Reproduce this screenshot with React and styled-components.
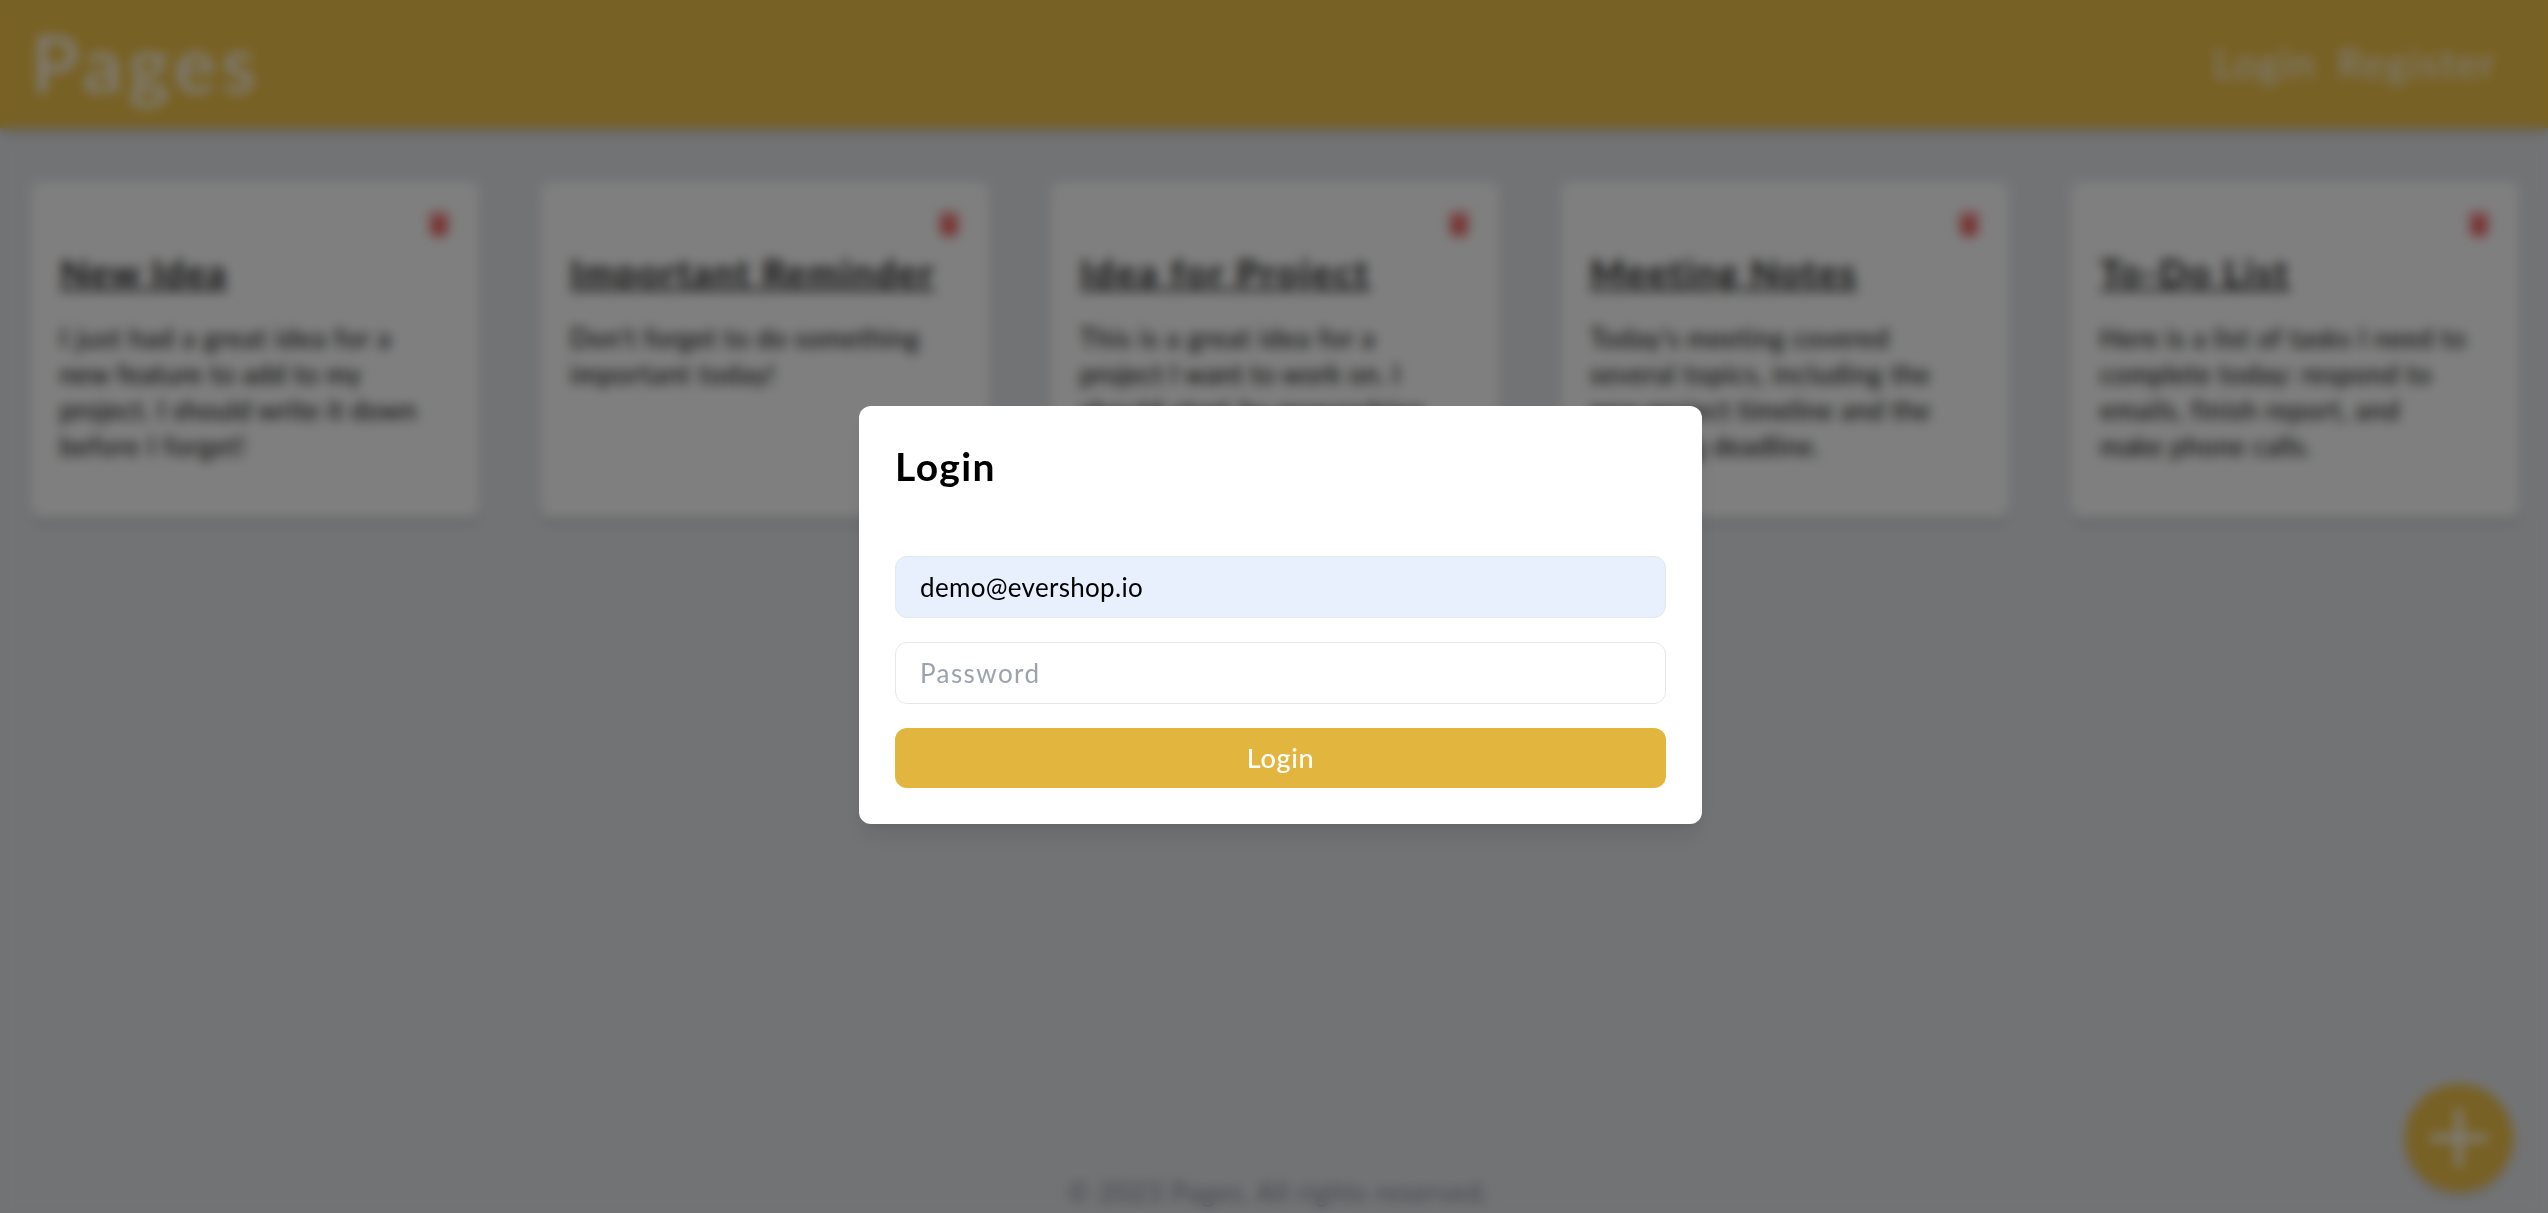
import React from "react";
import styled, { createGlobalStyle } from "styled-components";
import { FaTrash } from "react-icons/fa";

const Global = createGlobalStyle`
  *, *::before, *::after { box-sizing: border-box; }
  body {
    margin: 0;
    background: #e5e7eb;
    font-family: Lato, "Open Sans", sans-serif;
    font-size: 26px;
    line-height: 36px;
    color: #000;
  }
  h1, h2, p { margin: 0; }
`;
const Page = styled.div`
  height: 1213px;
  display: flex;
  flex-direction: column;
  overflow: hidden;
`;
const Header = styled.header`
  height: 128px;
  flex: none;
  display: flex;
  align-items: center;
  justify-content: space-between;
  padding: 0 51px 0 31px;
  background: #f1c248;
  color: #fff;
  box-shadow: 0 6px 9px -1px rgba(0, 0, 0, 0.12), 0 3px 6px -1px rgba(0, 0, 0, 0.08);
`;
const Text = styled.span`
  letter-spacing: ${(p) => p.$track || 0}px;
  white-space: nowrap;
`;
const Logo = styled.h1`
  padding-bottom: 2px;
  font-size: 79px;
  line-height: 72px;
  font-weight: 500;
`;
const Nav = styled.nav`
  display: flex;
  gap: 22px;
  padding-bottom: 3px;
  font-size: 40px;
`;
const Grid = styled.main`
  flex: 1;
  display: grid;
  grid-template-columns: repeat(5, 1fr);
  gap: 60px;
  align-items: start;
  padding: 54px 28px 0 30px;
`;
const Card = styled.article`
  height: 336px;
  padding: 30px 29px 30px 30px;
  border-radius: 12px;
  background: #fff;
  box-shadow: 0 6px 9px -1px rgba(0, 0, 0, 0.12), 0 3px 6px -1px rgba(0, 0, 0, 0.08);
`;
const DeleteRow = styled.div`
  display: flex;
  justify-content: flex-end;
  height: 36px;
  color: #ef4444;
  opacity: 0.85;
`;
const CardTitle = styled.h2`
  margin-bottom: 24px;
  font-size: 37px;
  line-height: 48px;
  font-weight: 700;
  color: #1c1c1c;
  text-decoration: underline;
  text-decoration-thickness: 3px;
`;
const Line = styled.p`
  line-height: 36px;
`;
const Footer = styled.footer`
  padding: 0 0 3px 10px;
  text-align: center;
  color: #848a96;
`;
const AddButton = styled.button`
  position: fixed;
  right: 35px;
  bottom: 21px;
  width: 108px;
  height: 108px;
  display: grid;
  place-items: center;
  border: 0;
  border-radius: 50%;
  background: #f1c248;
  color: #fff;
  box-shadow: 0 6px 9px -1px rgba(0, 0, 0, 0.1);
`;
const Overlay = styled.div`
  position: fixed;
  inset: 0;
  display: flex;
  align-items: center;
  justify-content: center;
  padding: 17px 0 0 13px;
  background: rgba(0, 0, 0, 0.5);
  backdrop-filter: blur(6px);
`;
const Modal = styled.section`
  width: 843px;
  height: 418px;
  padding: 36px;
  display: flex;
  flex-direction: column;
  gap: 24px;
  border-radius: 12px;
  background: #fff;
  box-shadow: 0 15px 23px -5px rgba(0, 0, 0, 0.1), 0 6px 9px -3px rgba(0, 0, 0, 0.06);
`;
const ModalTitle = styled.h2`
  height: 90px;
  font-size: 39px;
  line-height: 48px;
  font-weight: 700;
`;
const Field = styled.div`
  height: 62px;
  padding: 12px 24px;
  border: 1px solid #e5e7eb;
  border-radius: 12px;
  background: ${(p) => (p.$filled ? "#e8f0fe" : "#fff")};
  color: ${(p) => (p.$filled ? "#000" : "#9ca3af")};
`;
const Submit = styled.button`
  height: 60px;
  padding: 0;
  border: 0;
  border-radius: 12px;
  background: #e1b53e;
  color: #fff;
  font: 500 27px/36px Lato, "Open Sans", sans-serif;
`;

const notes = [
  {
    title: ["New Idea", 1.5],
    lines: [
      ["I just had a great idea for a", 1.05],
      ["new feature to add to my", 0.6],
      ["project. I should write it down", 0.53],
      ["before I forget!", 1.0],
    ],
  },
  {
    title: ["Important Reminder", 1.85],
    lines: [
      ["Don't forget to do something", 0.67],
      ["important today!", 0.97],
    ],
  },
  {
    title: ["Idea for Project", 2.35],
    lines: [
      ["This is a great idea for a", 1.04],
      ["project I want to work on. I", 0.47],
      ["should start by researching", 1.42],
    ],
  },
  {
    title: ["Meeting Notes", 1.75],
    lines: [
      ["Today's meeting covered", 0.85],
      ["several topics, including the", 0.92],
      ["new project timeline and the", 0.55],
      ["upcoming deadline.", 0.5],
    ],
  },
  {
    title: ["To-Do List", 2.05],
    lines: [
      ["Here is a list of tasks I need to", 0.77],
      ["complete today: respond to", 0.73],
      ["emails, finish report, and", 0.85],
      ["make phone calls.", 0.65],
    ],
  },
];

export default function App() {
  return (
    <>
      <Global />
      <Page>
        <Header>
          <Logo><Text $track={5.5}>Pages</Text></Logo>
          <Nav>
            <Text $track={1.5}>Login</Text>
            <Text $track={2.1}>Register</Text>
          </Nav>
        </Header>
        <Grid>
          {notes.map(({ title, lines }) => (
            <Card key={title[0]}>
              <DeleteRow><FaTrash size={24} /></DeleteRow>
              <CardTitle><Text $track={title[1]}>{title[0]}</Text></CardTitle>
              {lines.map(([text, track]) => (
                <Line key={text}><Text $track={track}>{text}</Text></Line>
              ))}
            </Card>
          ))}
        </Grid>
        <Footer><Text $track={1.05}>© 2023 Pages. All rights reserved.</Text></Footer>
        <AddButton>
          <svg width="60" height="60" viewBox="0 0 60 60" fill="none" stroke="currentColor" strokeWidth="7" strokeLinecap="round">
            <path d="M30 4v52M4 30h52" />
          </svg>
        </AddButton>
      </Page>
      <Overlay>
        <Modal>
          <ModalTitle><Text $track={1.4}>Login</Text></ModalTitle>
          <Field $filled><Text $track={0.32}>demo@evershop.io</Text></Field>
          <Field><Text $track={1.4}>Password</Text></Field>
          <Submit><Text $track={0.7}>Login</Text></Submit>
        </Modal>
      </Overlay>
    </>
  );
}
